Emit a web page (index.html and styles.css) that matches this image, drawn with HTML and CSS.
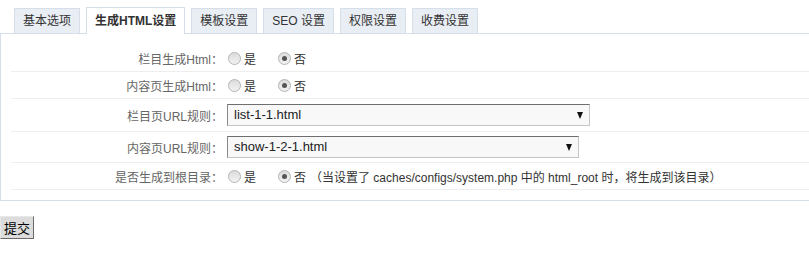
FILE: index.html
```html
<!DOCTYPE html>
<html lang="zh-CN">
<head>
<meta charset="utf-8">
<title>生成HTML设置</title>
<link rel="stylesheet" href="styles.css">
</head>
<body>
<div class="tabs">
  <span class="tab">基本选项</span>
  <span class="tab active">生成HTML设置</span>
  <span class="tab">模板设置</span>
  <span class="tab">SEO 设置</span>
  <span class="tab">权限设置</span>
  <span class="tab">收费设置</span>
</div>
<div class="panel">
  <div class="row">
    <div class="label">栏目生成Html：</div>
    <div class="field">
      <label class="opt"><span class="radio"></span>是</label>
      <label class="opt"><span class="radio checked"></span>否</label>
    </div>
  </div>
  <div class="row">
    <div class="label">内容页生成Html：</div>
    <div class="field">
      <label class="opt"><span class="radio"></span>是</label>
      <label class="opt"><span class="radio checked"></span>否</label>
    </div>
  </div>
  <div class="row row-select row-tall">
    <div class="label">栏目页URL规则：</div>
    <div class="field">
      <span class="select select-wide"><span class="select-text">list-1-1.html</span></span>
    </div>
  </div>
  <div class="row row-select">
    <div class="label">内容页URL规则：</div>
    <div class="field">
      <span class="select select-narrow"><span class="select-text">show-1-2-1.html</span></span>
    </div>
  </div>
  <div class="row">
    <div class="label">是否生成到根目录：</div>
    <div class="field">
      <label class="opt"><span class="radio"></span>是</label>
      <label class="opt opt-last"><span class="radio checked"></span>否</label>
      <span class="note">（当设置了 caches/configs/system.php 中的 html_root 时，将生成到该目录）</span>
    </div>
  </div>
</div>
<div class="actions">
  <button class="btn" type="button">提交</button>
</div>
</body>
</html>
```

FILE: styles.css
```css
html, body {
  margin: 0;
  padding: 0;
  background: #fff;
  overflow: hidden;
}
body {
  font-family: "Liberation Sans", "Noto Sans CJK SC", sans-serif;
  font-size: 12px;
  color: #333;
}

/* tabs */
.tabs {
  display: flex;
  align-items: flex-end;
  gap: 6px;
  height: 26px;
  padding: 7px 0 0 14px;
}
.tab {
  box-sizing: border-box;
  height: 25px;
  line-height: 24px;
  padding: 0 8px;
  border: 1px solid #d6dee9;
  border-bottom: none;
  background: #e9edf4;
  color: #333;
  white-space: nowrap;
}
.tab.active {
  position: relative;
  z-index: 1;
  height: 27px;
  line-height: 26px;
  margin-bottom: -1px;
  padding: 0 8px;
  background: #fff;
  font-weight: bold;
}

/* panel */
.panel {
  border: 1px solid #d6dee9;
  border-right: none;
  padding: 11px 0 10px 10px;
}
.row {
  box-sizing: border-box;
  display: flex;
  align-items: center;
  height: 27px;
  border-bottom: 1px solid #eee;
}
.row-select { height: 31px; }
.row-tall { height: 33px; }
.label {
  box-sizing: border-box;
  width: 216px;
  padding-right: 4px;
  text-align: right;
  color: #666;
  white-space: nowrap;
}
.field {
  display: flex;
  align-items: center;
  white-space: nowrap;
  color: #333;
}

/* radios */
.opt {
  display: inline-flex;
  align-items: center;
  margin-right: 21px;
}
.opt-last { margin-right: 4px; }
.radio {
  box-sizing: border-box;
  width: 13px;
  height: 13px;
  margin: 0 3px 0 1px;
  border: 1px solid #b4b4b4;
  border-radius: 50%;
  background: linear-gradient(#dcdcdc, #f2f2f2);
  display: inline-flex;
  align-items: center;
  justify-content: center;
}
.radio.checked::before {
  content: "";
  width: 5px;
  height: 5px;
  border-radius: 50%;
  background: #555;
}
.note { color: #333; }

/* selects */
.select {
  position: relative;
  box-sizing: border-box;
  display: inline-block;
  height: 22px;
  line-height: 20px;
  padding-left: 6px;
  border: 1px solid #c6c6c6;
  border-top-color: #6e6e6e;
  border-left-color: #8a8a8a;
  background: #f8f8f8;
  font-family: "Liberation Sans", Arial, sans-serif;
  font-size: 13px;
  color: #222;
}
.select-wide { width: 363px; }
.select-narrow { width: 352px; }
.select::after {
  content: "";
  position: absolute;
  right: 6px;
  top: 7px;
  border-left: 3.5px solid transparent;
  border-right: 3.5px solid transparent;
  border-top: 7px solid #111;
}

/* actions */
.actions {
  padding-top: 15px;
}
.btn {
  box-sizing: border-box;
  height: 23px;
  margin: 0;
  padding: 0 3px;
  border: 1px solid #e8e8e8;
  border-right-color: #6a6a6a;
  border-bottom-color: #6a6a6a;
  background: #dcdcdc;
  font-family: "Noto Sans CJK SC", sans-serif;
  font-size: 13px;
  color: #000;
}
```
